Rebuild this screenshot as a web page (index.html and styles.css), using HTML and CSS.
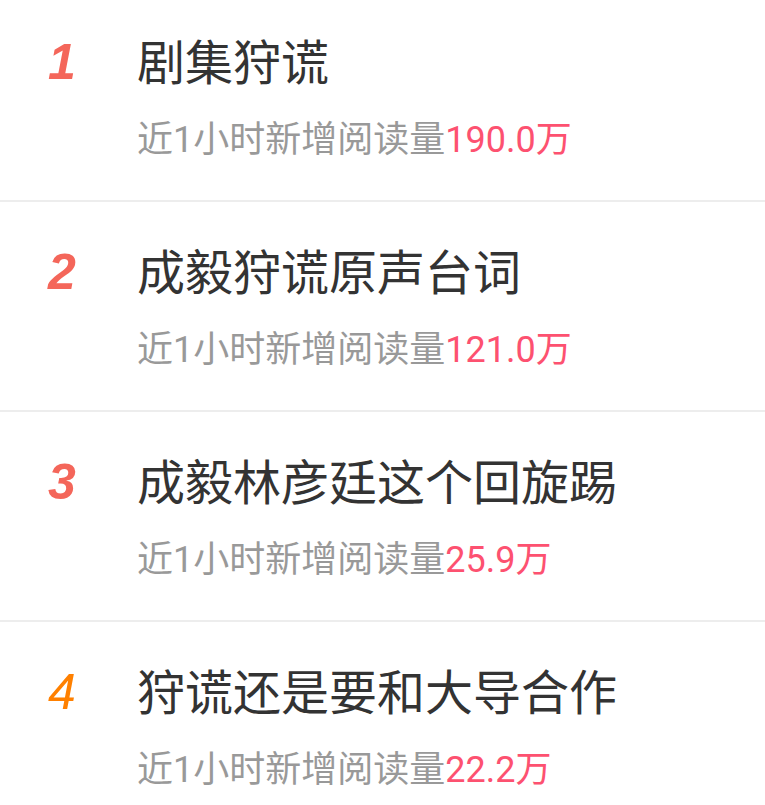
FILE: index.html
```html
<!DOCTYPE html>
<html lang="zh-CN">
<head>
  <meta charset="UTF-8" />
  <meta name="viewport" content="width=device-width, initial-scale=1.0"/>
  <title>热搜榜</title>
  <link rel="stylesheet" href="styles.css">
</head>
<body>
  <ul class="hot-list">
    <li class="hot-item">
      <span class="rank top">1</span>
      <div class="info">
        <div class="title">剧集狩谎</div>
        <div class="meta">近1小时新增阅读量<span class="num">190.0万</span></div>
      </div>
    </li>
    <li class="hot-item">
      <span class="rank top">2</span>
      <div class="info">
        <div class="title">成毅狩谎原声台词</div>
        <div class="meta">近1小时新增阅读量<span class="num">121.0万</span></div>
      </div>
    </li>
    <li class="hot-item">
      <span class="rank top">3</span>
      <div class="info">
        <div class="title">成毅林彦廷这个回旋踢</div>
        <div class="meta">近1小时新增阅读量<span class="num">25.9万</span></div>
      </div>
    </li>
    <li class="hot-item">
      <span class="rank">4</span>
      <div class="info">
        <div class="title">狩谎还是要和大导合作</div>
        <div class="meta">近1小时新增阅读量<span class="num">22.2万</span></div>
      </div>
    </li>
  </ul>
</body>
</html>
```

FILE: styles.css
```css
body {
  margin: 0;
  background: #fff;
  font-family: "Noto Sans CJK SC", "Noto Sans", sans-serif;
  overflow: hidden;
}

.hot-list {
  list-style: none;
  margin: -8px 0 0;
  padding: 0;
}

.hot-item {
  display: flex;
  align-items: flex-start;
  box-sizing: border-box;
  height: 210px;
  padding-top: 35px;
  border-bottom: 2px solid #ededed;
}

.rank {
  box-sizing: border-box;
  width: 137px;
  padding-right: 13px;
  padding-top: 3px;
  text-align: center;
  font-family: "Liberation Sans", Arial, sans-serif;
  font-size: 50px;
  font-style: italic;
  line-height: 64px;
  color: #ff8000;
}

.rank.top {
  font-weight: bold;
  color: #f4665a;
}

.title {
  font-size: 48px;
  line-height: 64px;
  color: #333;
}

.meta {
  margin-top: 25px;
  font-family: Roboto, "Noto Sans CJK SC", sans-serif;
  font-size: 36px;
  line-height: 48px;
  color: #999;
}

.num {
  color: #fd5170;
}
```
